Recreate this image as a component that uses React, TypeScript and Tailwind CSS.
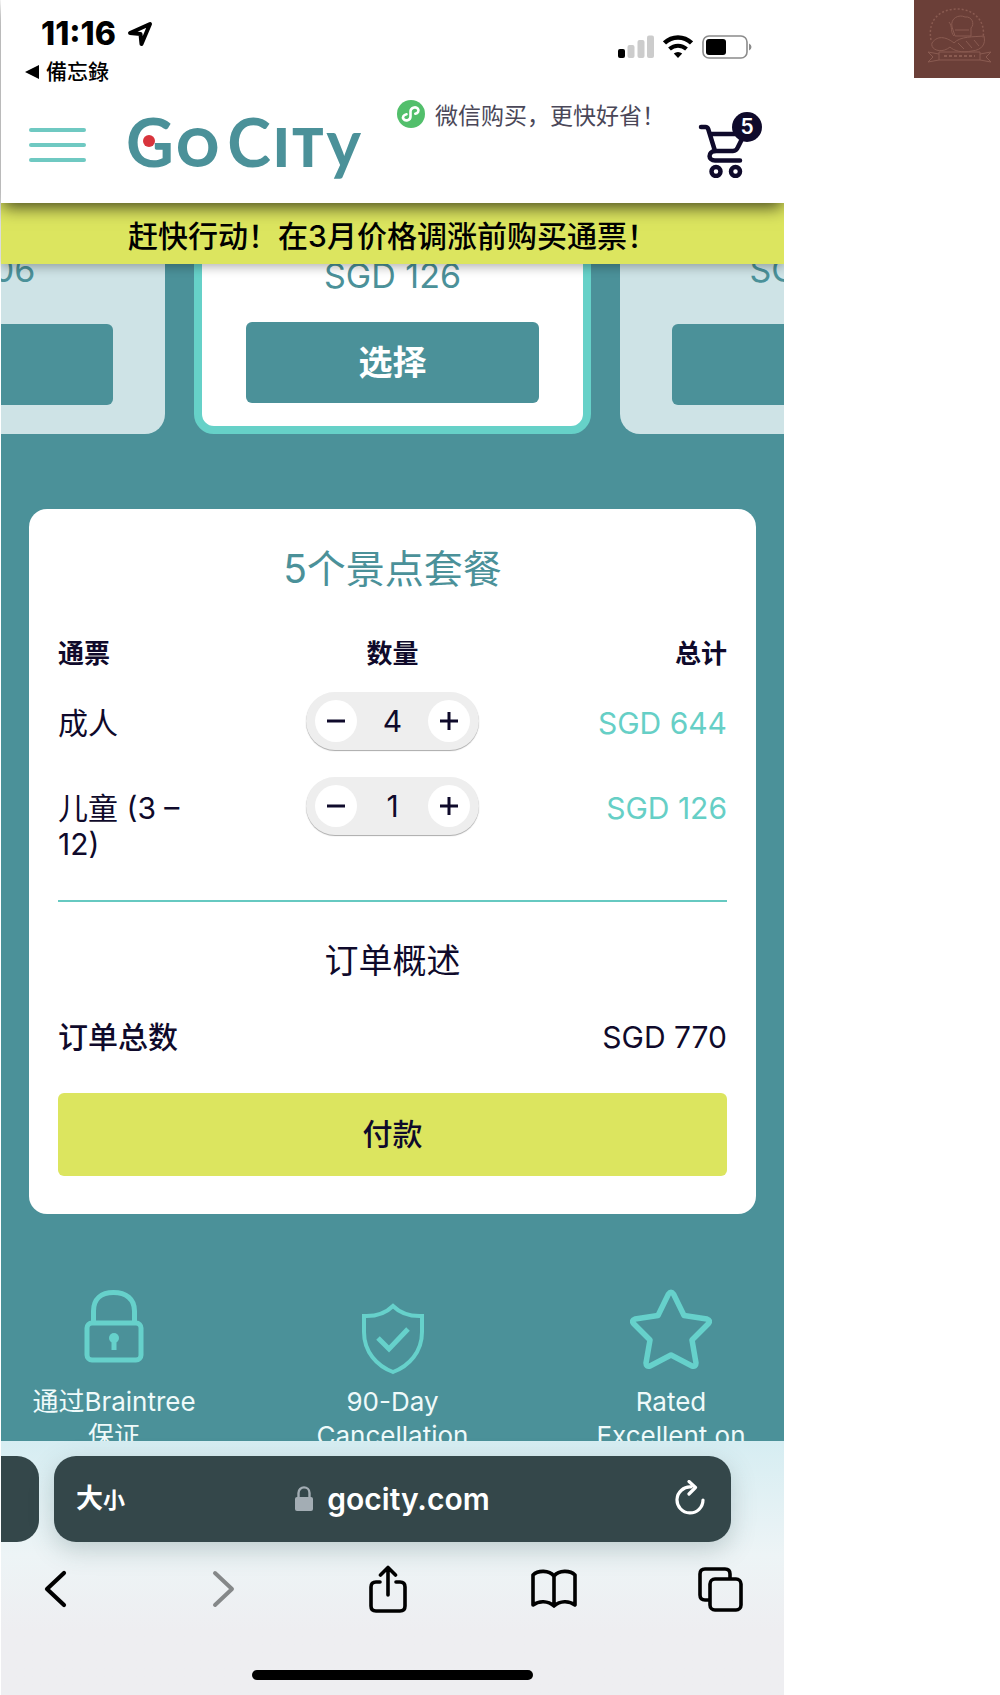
import React, { useState } from 'react';

const StatusBar: React.FC = () => (
  <div className="flex items-start justify-between pl-6 pr-8 pt-4">
    <div>
      <div className="flex items-center gap-2 pl-4 text-[32px] font-extrabold leading-9 text-black">
        <span className="w-[78px] whitespace-nowrap">11:16</span>
        <svg viewBox="0 0 26 26" className="h-[26px] w-[26px]" fill="none" stroke="#000" strokeWidth="4" strokeLinejoin="round">
          <path d="M3 12 L23 3 L14.5 23 L13.5 13 Z" />
        </svg>
      </div>
      <button className="mt-1.5 flex items-center gap-[7px] text-[21px] font-medium leading-7 text-black">
        <svg viewBox="0 0 14 14" className="h-3.5 w-3.5">
          <path d="M0 7 L14 0 V14 Z" fill="#000" />
        </svg>
        <span className="font-['Inter','Noto_Sans_CJK_TC',sans-serif]">備忘錄</span>
      </button>
    </div>
    <div className="flex items-center gap-[9px] pt-[19px]">
      <svg viewBox="0 0 36 24" className="h-6 w-9">
        <rect x="0" y="14" width="7" height="9" rx="2" fill="#000" />
        <rect x="9.500" y="10" width="7" height="13" rx="2" fill="#ccc" />
        <rect x="19.500" y="5" width="7" height="18" rx="2" fill="#ccc" />
        <rect x="29" y="0.500" width="7" height="22.500" rx="2" fill="#ccc" />
      </svg>
      <svg viewBox="0 0 30 24" className="h-6 w-[30px]" fill="none" stroke="#000">
        <path d="M1.500 8 A19.500 19.500 0 0 1 28.500 8" strokeWidth="4.500" />
        <path d="M6.500 14 A12.500 12.500 0 0 1 23.500 14" strokeWidth="4" />
        <path d="M15 23 L10.800 18.600 A6 6 0 0 1 19.200 18.600 Z" fill="#000" stroke="none" />
      </svg>
      <svg viewBox="0 0 50 24" className="h-6 w-[50px]">
        <rect x="1" y="1" width="44" height="22" rx="6" fill="none" stroke="#8b8b8b" strokeWidth="1.600" />
        <rect x="4" y="4" width="20" height="16" rx="3" fill="#000" />
        <path d="M47 8.500 Q49.500 9.500 49.500 12 Q49.500 14.500 47 15.500 Z" fill="#8b8b8b" />
      </svg>
    </div>
  </div>
);

const Logo: React.FC = () => (
  <a
    href="#home"
    aria-label="Go City"
    className="relative flex h-[66px] w-[235px] items-baseline justify-between font-['Lato',sans-serif] font-bold leading-[60px] text-[#4b9199]"
  >
    <span className="text-[66px]">G</span>
    <span className="text-[52px] font-extrabold">O</span>
    <span className="pl-1.5 text-[66px]">C</span>
    <span className="text-[52px] font-extrabold">I</span>
    <span className="text-[52px] font-extrabold">T</span>
    <span className="text-[66px]">y</span>
    <span className="absolute left-[17px] top-[23px] h-3 w-3 rounded-full bg-[#d8343c]" />
  </a>
);

const TopNav: React.FC<{ count: number }> = ({ count }) => (
  <div className="flex h-[117px] items-center pl-7 pr-[22px]">
    <button aria-label="菜单" className="flex w-[57px] flex-col gap-[11px]">
      <span className="h-1 w-full rounded-sm bg-[#6fc9c2]" />
      <span className="h-1 w-full rounded-sm bg-[#6fc9c2]" />
      <span className="h-1 w-full rounded-sm bg-[#6fc9c2]" />
    </button>
    <div className="pl-10">
      <Logo />
    </div>
    <div className="ml-9 mt-3 flex items-center gap-2.5 self-start">
      <svg viewBox="0 0 28 28" className="h-7 w-7">
        <circle cx="14" cy="14" r="14" fill="#52bf6b" />
        <path
          d="M9.500 14.200 C6.500 14.800 5.200 17 6.500 19 C8.200 21.500 13.500 20.500 13.500 16.500 V11.500 C13.500 7.500 18.600 6.200 20.800 8.600 C22.500 10.800 20.800 13.200 18.300 13.800"
          fill="none"
          stroke="#fff"
          strokeWidth="2.600"
          strokeLinecap="round"
        />
      </svg>
      <span className="whitespace-nowrap pt-1 text-[23px] leading-7 text-[#4a4758]">微信购买{'\uff0c'}更快好省{'\uff01'}</span>
    </div>
    <button aria-label="购物车" className="relative ml-auto h-[66px] w-[64px]">
      <svg viewBox="0 0 64 66" className="h-[66px] w-16" fill="none" stroke="#0f0a2b" strokeWidth="4.500" strokeLinecap="round" strokeLinejoin="round">
        <path d="M3 15 H7.500 C9 15 9.800 15.800 10.200 17 L17 39 H35 C37.500 39 39 37.500 40 35 L44 27 M12.500 22 H42" />
        <path d="M17 39 C9.500 40 10 48.500 17 48.500 H42" />
        <circle cx="18" cy="59.500" r="4.500" />
        <circle cx="37.500" cy="59.500" r="4.500" />
      </svg>
      <span className="absolute right-0 top-0 flex h-[30px] w-[30px] items-center justify-center rounded-full bg-[#0f0a2b] text-[21px] font-semibold text-white">
        {count}
      </span>
    </button>
  </div>
);

const PackageCard: React.FC<{ price: string; active?: boolean }> = ({ price, active }) => (
  <article
    className={
      active
        ? 'flex w-[397px] shrink-0 flex-col items-center rounded-[20px] border-8 border-[#66d1c8] bg-white px-11 pb-[23px] pt-16'
        : 'flex w-[397px] shrink-0 flex-col items-center rounded-[20px] bg-[#cee3e6] px-[52px] pb-[29px] pt-16'
    }
  >
    <p className={active ? 'mb-[26px] text-[34px] leading-10 text-[#4b9199]' : 'mb-[34px] text-[34px] leading-10 text-[#4b9199]'}>
      SGD {price}
    </p>
    <button className="h-[81px] w-full rounded-md bg-[#4b9199] text-[34px] font-semibold text-white">{active ? '选择' : ''}</button>
  </article>
);

interface StepperProps {
  label: string;
  value: number;
  onChange: (value: number) => void;
}

const Stepper: React.FC<StepperProps> = ({ label, value, onChange }) => (
  <div className="mx-auto flex h-[58px] w-[173px] items-center justify-between rounded-full bg-[#eee] px-[9px] shadow-[0_1px_1px_#aaa]">
    <button
      aria-label={`${label} −`}
      onClick={() => onChange(Math.max(0, value - 1))}
      className="flex h-[42px] w-[42px] items-center justify-center rounded-full bg-white"
    >
      <svg viewBox="0 0 18 18" className="h-[18px] w-[18px]" stroke="#0f0a2b" strokeWidth="3">
        <path d="M0 9 H18" />
      </svg>
    </button>
    <span className="text-[30px] leading-9">{value}</span>
    <button
      aria-label={`${label} +`}
      onClick={() => onChange(value + 1)}
      className="flex h-[42px] w-[42px] items-center justify-center rounded-full bg-white"
    >
      <svg viewBox="0 0 18 18" className="h-[18px] w-[18px]" stroke="#0f0a2b" strokeWidth="3">
        <path d="M0 9 H18 M9 0 V18" />
      </svg>
    </button>
  </div>
);

interface OrderCardProps {
  adults: number;
  kids: number;
  setAdults: (value: number) => void;
  setKids: (value: number) => void;
}

const OrderCard: React.FC<OrderCardProps> = ({ adults, kids, setAdults, setKids }) => {
  const rows = [
    { label: '成人', value: adults, price: 161, onChange: setAdults },
    { label: '儿童 (3 – 12)', value: kids, price: 126, onChange: setKids },
  ];
  const total = rows.reduce((sum, r) => sum + r.value * r.price, 0);

  return (
    <section className="mx-7 mt-[75px] rounded-[18px] bg-white px-[29px] pb-[38px] pt-9 text-[#0f0a2b]">
      <h2 className="text-center text-[39px] leading-[48px] text-[#4b9199]">5个景点套餐</h2>

      <table className="mt-[43px] w-full table-fixed text-[30px] leading-9">
        <thead>
          <tr className="text-[26px] leading-9">
            <th scope="col" className="w-[150px] pb-5 text-left font-semibold">通票</th>
            <th scope="col" className="pb-5 text-center font-semibold">数量</th>
            <th scope="col" className="w-[150px] pb-5 text-right font-semibold">总计</th>
          </tr>
        </thead>
        <tbody>
          {rows.map(r => (
            <tr key={r.label} className="h-[85px] align-top">
              <th scope="row" className="pt-[13px] text-left font-normal">{r.label}</th>
              <td>
                <Stepper label={r.label} value={r.value} onChange={r.onChange} />
              </td>
              <td className="whitespace-nowrap pt-[13px] text-right text-[#66cfc6]">SGD {r.value * r.price}</td>
            </tr>
          ))}
        </tbody>
      </table>

      <hr className="mt-[38px] border-t-2 border-[#66c9c1]" />

      <h3 className="mt-[35px] text-center text-[34px] leading-[48px]">订单概述</h3>
      <div className="mt-[34px] flex items-center justify-between text-[30px] leading-9">
        <span className="font-medium">订单总数</span>
        <span>SGD {total}</span>
      </div>
      <button className="mt-[38px] h-[83px] w-full rounded-md bg-[#dce55f] text-[30px] font-medium">付款</button>
    </section>
  );
};

const Features: React.FC = () => (
  <section className="flex h-[227px] justify-between overflow-hidden px-7 pt-[75px] text-center text-[26px] leading-[34px] text-[#effafa]">
    <div className="flex w-[170px] flex-col items-center">
      <svg viewBox="0 0 60 74" className="h-[74px] w-[60px] shrink-0" fill="none" stroke="#66d1cb" strokeWidth="5">
        <rect x="3" y="34" width="54" height="37" rx="5" />
        <path d="M9.500 34 V22 C9.500 10 17 3.500 29.500 3.500 C42 3.500 50.500 10 50.500 22 V34" />
        <circle cx="30" cy="49" r="5" fill="#66d1cb" stroke="none" />
        <path d="M30 50 V61" />
      </svg>
      <p className="mt-[22px]">通过Braintree保证</p>
    </div>
    <div className="flex w-[170px] flex-col items-center pt-3">
      <svg viewBox="0 0 64 74" className="h-[74px] w-16 shrink-0" fill="none" stroke="#66d1cb" strokeWidth="4">
        <path d="M32 5 C24 13 14 15.500 3 15 V31 C3 51 16 65 32 71 C48 65 61 51 61 31 V15 C50 15.500 40 13 32 5 Z" />
        <path d="M17 37 L28 48 L47 28" strokeWidth="5" />
      </svg>
      <p className="mt-2.5">90-Day Cancellation</p>
    </div>
    <div className="flex w-[170px] flex-col items-center">
      <svg viewBox="0 0 82 80" className="h-20 w-[82px] shrink-0" fill="none" stroke="#66d1cb" strokeWidth="5.500" strokeLinejoin="round">
        <path d="M38.500 5 Q41 1.500 43.500 5 L54 26.500 L77 30 Q81 31.500 78.500 34.500 L62 51 L66 74 Q66 78 62 77 L41 66 L20 77 Q16 78 16 74 L20 51 L3.500 34.500 Q1 31.500 5 30 L28 26.500 Z" />
      </svg>
      <p className="mt-4">Rated Excellent on</p>
    </div>
  </section>
);

const BrowserBar: React.FC = () => (
  <footer className="bg-linear-to-b from-[#d6edf2] via-[#edf4f6] via-45% to-[#eeeef1] to-75% pb-[15px] pt-[15px]">
    <div className="flex gap-[15px] pr-[53px]">
      <div className="w-[38px] rounded-r-[22px] bg-[#34474a]" />
      <div className="flex h-[86px] flex-1 items-center justify-between rounded-[22px] bg-[#34474a] px-[22px] text-white shadow-[0_8px_24px_rgba(60,90,90,0.25)]">
        <button aria-label="大小" className="w-[60px] whitespace-nowrap text-left font-bold">
          <span className="text-[27px]">大</span>
          <span className="text-[22px]">小</span>
        </button>
        <a href="#gocity" className="flex items-center gap-3.5 text-[30px] font-semibold leading-9">
          <svg viewBox="0 0 18 26" className="h-[26px] w-[18px]">
            <rect x="0" y="11" width="18" height="14" rx="2" fill="#a3adb4" />
            <path d="M3.500 12 V7 C3.500 -0.500 14.500 -0.500 14.500 7 V12" fill="none" stroke="#a3adb4" strokeWidth="2.400" />
          </svg>
          gocity.com
        </a>
        <button aria-label="重新加载" className="flex w-[60px] justify-end">
          <svg viewBox="0 0 36 38" className="h-[38px] w-9" fill="none" stroke="#fff" strokeWidth="3.200" strokeLinecap="round" strokeLinejoin="round">
            <path d="M18 7 A13 13 0 1 0 30 20 M16 1.500 L22.500 7.500 L16 14" />
          </svg>
        </button>
      </div>
    </div>

    <div className="mt-[23px] flex h-12 items-center justify-between pl-[30px] pr-10 text-black">
      <button aria-label="后退" className="flex w-12 justify-center">
        <svg viewBox="0 0 30 40" className="h-10 w-[30px]" fill="none" stroke="currentColor" strokeWidth="4.200" strokeLinecap="round" strokeLinejoin="round">
          <path d="M24 4 L7 20 L24 36" />
        </svg>
      </button>
      <button aria-label="前进" className="flex w-12 justify-center text-[#858889]">
        <svg viewBox="0 0 30 40" className="h-10 w-[30px]" fill="none" stroke="currentColor" strokeWidth="4" strokeLinecap="round" strokeLinejoin="round">
          <path d="M9 4 L26 20 L9 36" />
        </svg>
      </button>
      <button aria-label="分享" className="flex w-12 justify-center">
        <svg viewBox="0 0 40 48" className="h-12 w-10" fill="none" stroke="currentColor" strokeWidth="3.600" strokeLinecap="round" strokeLinejoin="round">
          <path d="M12 17 H8 Q3 17 3 22 V41 Q3 46 8 46 H32 Q37 46 37 41 V22 Q37 17 32 17 H28 M20 30 V3 M12.500 10 L20 2.500 L27.500 10" />
        </svg>
      </button>
      <button aria-label="书签" className="flex w-12 justify-center">
        <svg viewBox="0 0 48 40" className="h-10 w-12" fill="none" stroke="currentColor" strokeWidth="3.600" strokeLinejoin="round">
          <path d="M24 7 C19 1 8 1 3 6 V36 C9 31.500 18 31.500 24 37 C30 31.500 39 31.500 45 36 V6 C40 1 29 1 24 7 Z M24 7 V37" />
        </svg>
      </button>
      <button aria-label="标签页" className="flex w-12 justify-center">
        <svg viewBox="0 0 46 46" className="h-[46px] w-[46px]" fill="none" stroke="currentColor" strokeWidth="3.600" strokeLinejoin="round">
          <path d="M12 34 H8 Q3 34 3 29 V8 Q3 3 8 3 H28 Q33 3 33 8 V12" />
          <rect x="13" y="13" width="31" height="31" rx="5" />
        </svg>
      </button>
    </div>

    <div className="mx-auto mt-[57px] h-2.5 w-[281px] rounded-full bg-black" />
  </footer>
);

// faint line drawing: baker with a tray above a ribbon
const CornerStamp: React.FC = () => (
  <aside className="h-[78px] w-[86px] shrink-0 bg-[#6b3f38]">
    <svg viewBox="0 0 86 78" className="h-full w-full" fill="none" stroke="#8a5b51" strokeWidth="1">
      <path d="M17 40 C13 18 28 9 43 9 C60 9 72 21 69 38" strokeDasharray="2 2" strokeWidth="1.500" />
      <path d="M38 27 C36 18 45 14 51 17 C58 16 61 24 57 28 V36 H41 L38 27 Z M41 30 H55 M40 36 C36 32 39 27 35 22" />
      <path d="M18 43 C24 34 34 38 40 43 C46 36 60 37 70 36 C72 44 68 50 58 51 C48 53 40 51 36 47 C28 54 16 50 18 43 Z M44 43 L50 49 M52 41 L58 48 M60 40 L65 46" />
      <path d="M25 52 H66 V60 H25 Z M25 54 L14 52 L19 57 L14 62 L25 60 M66 54 L77 52 L72 57 L77 62 L66 60" />
      <path d="M30 56 H61" strokeDasharray="3 2" strokeWidth="2" />
    </svg>
  </aside>
);

export default function App() {
  const [adults, setAdults] = useState(4);
  const [kids, setKids] = useState(1);

  return (
    <div className="flex items-start justify-between bg-white font-['Inter','Noto_Sans_CJK_SC',sans-serif]">
      <main lang="zh-CN" className="w-full max-w-[784px] overflow-hidden pl-px">
        <header className="relative z-20 bg-white shadow-[0_6px_16px_-2px_rgba(0,0,0,0.7)]">
          <StatusBar />
          <TopNav count={adults + kids} />
        </header>
        <p className="relative z-10 bg-[#dce55f] pb-2.5 pt-[15px] text-center text-[30px] font-medium leading-9 text-black shadow-[0_3px_10px_rgba(0,0,0,0.3)]">
          赶快行动{'\uff01'}在3月价格调涨前购买通票{'\uff01'}
        </p>

        <div className="bg-[#4b9199]">
          <div className="flex h-[170px] items-end justify-center gap-[29px] overflow-hidden">
            <PackageCard price="106" />
            <PackageCard price="126" active />
            <PackageCard price="146" />
          </div>
          <OrderCard adults={adults} kids={kids} setAdults={setAdults} setKids={setKids} />
          <Features />
        </div>

        <BrowserBar />
      </main>
      <CornerStamp />
    </div>
  );
}
